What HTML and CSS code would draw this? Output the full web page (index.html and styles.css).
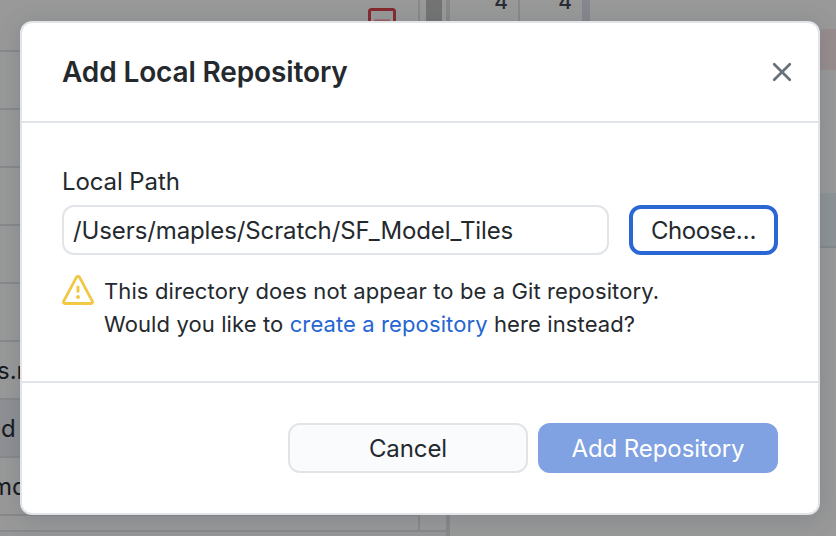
FILE: index.html
```html
<!DOCTYPE html>
<html lang="en">
<head>
<meta charset="utf-8">
<title>Add Local Repository</title>
<link rel="stylesheet" href="styles.css">
</head>
<body>
<main class="app">
  <section class="sidebar">
    <div class="files">
      <div class="row first"><svg class="removed" width="28" height="28" viewBox="0 0 28 28" fill="none"><rect x="1.5" y="1.5" width="25" height="25" rx="2" stroke="#862a30" stroke-width="3"/><path d="M6 12.5h16" stroke="#9d5a5e" stroke-width="2"/></svg></div>
      <div class="row"></div>
      <div class="row"></div>
      <div class="row"></div>
      <div class="row"></div>
      <div class="row"></div>
      <div class="row"><span class="name n1">s.md</span></div>
      <div class="row selected"><span class="name n2">d</span></div>
      <div class="row"><span class="name n3">md</span></div>
      <div class="row last"></div>
      <div class="row commit"></div>
    </div>
    <div class="scroll"><div class="thumb"></div></div>
  </section>
  <section class="diff">
    <div class="gutter"><span class="num">4</span><span class="num second">4</span><span class="strip"></span></div>
    <div class="code"><div class="deleted"></div><div class="hunk"></div></div>
  </section>
</main>
<div class="dialog" role="dialog" aria-labelledby="title">
  <header class="header">
    <h1 id="title" class="title">Add Local Repository</h1>
    <svg class="close" width="20" height="20" viewBox="0 0 20 20" fill="none" stroke="#69707a" stroke-width="2.7" stroke-linecap="round"><path d="M2.2 2.2 17.8 17.8M17.8 2.2 2.2 17.8"/></svg>
  </header>
  <div class="content">
    <div class="label"><span>Local Path</span></div>
    <div class="pathrow">
      <div class="input"><span class="path">/Users/maples/Scratch/SF_Model_Tiles</span></div>
      <button class="button choose"><span>Choose…</span></button>
    </div>
    <div class="warning">
      <svg class="alert" width="32" height="30" viewBox="0 0 32 30" fill="none" stroke="#f2c744" stroke-linecap="round" stroke-linejoin="round"><path d="M14.4 2.3a1.85 1.85 0 0 1 3.2 0L30.3 26.2a1.5 1.5 0 0 1-1.3 2.3H3a1.5 1.5 0 0 1-1.3-2.3Z" stroke-width="2.8"/><path d="M16 12v4.2" stroke-width="3"/><circle cx="16" cy="22" r="2" fill="#f2c744" stroke="none"/></svg>
      <p class="message">This directory does not appear to be a Git repository.<br>Would you like to <a class="link">create a repository</a> here instead?</p>
    </div>
  </div>
  <footer class="footer">
    <button class="button cancel"><span>Cancel</span></button>
    <button class="button add"><span>Add Repository</span></button>
  </footer>
</div>
</body>
</html>
```
FILE: styles.css
```css
* { box-sizing: border-box; }
body { margin: 0; width: 836px; height: 536px; overflow: hidden; font-family: Inter, "Liberation Sans", sans-serif; font-size: 24px; color: #24292e; }
.app { display: flex; width: 836px; height: 536px; background: #999; }
.sidebar { display: flex; width: 450px; border-right: 4px solid #87898c; background: #959698; }
.files { width: 420px; height: 532px; border-right: 2px solid #88898b; background: #999; overflow: hidden; }
.row { height: 58px; border-bottom: 2px solid #88898b; white-space: nowrap; line-height: 58px; }
.first { height: 52px; padding: 8px 0 0 368px; line-height: 0; }
.selected { background: #8e9094; }
.last { height: 16px; }
.commit { height: 4px; border: 0; }
.name { display: inline-block; color: #17191d; }
.n1 { margin-left: -3px; }
.n2 { margin-left: 1px; }
.n3 { margin-left: -9px; }
.scroll { flex: 1; height: 532px; padding-left: 6px; border-bottom: 2px solid #88898b; background: #999; }
.thumb { width: 16px; height: 180px; background: #747474; }
.diff { display: flex; flex: 1; }
.gutter { display: flex; width: 140px; height: 180px; }
.num { width: 70px; padding-right: 10px; border-right: 2px solid #88898c; text-align: right; font-size: 21px; font-weight: 500; line-height: 3px; color: #292c32; }
.second { width: 62px; border: 0; }
.strip { width: 8px; background: #85888d; }
.code { flex: 1; padding-top: 29px; }
.deleted { height: 41px; background: #978d8e; }
.hunk { height: 55px; margin-top: 123px; background: #8d9396; border-bottom: 2px solid #85888c; }
.dialog { position: absolute; left: 20px; top: 21px; width: 800px; height: 494px; border: 2px solid #e1e4e8; border-radius: 12px; background: #fff; box-shadow: 0 4px 24px rgba(52,67,80,.2); }
.header { display: flex; align-items: center; justify-content: space-between; height: 100px; padding: 0 26px 0 40px; border-bottom: 2px solid #e1e4e8; }
.title { margin: 0; font-size: 28px; font-weight: 600; line-height: 34px; letter-spacing: -.13px; white-space: nowrap; }
.content { height: 260px; padding: 40px 40px 0; border-bottom: 2px solid #e1e4e8; }
.label { height: 42px; line-height: 38px; letter-spacing: -.1px; }
.pathrow { display: flex; gap: 20px; height: 50px; }
.input { width: 547px; height: 50px; padding-left: 9px; border: 2px solid #e1e4e8; border-radius: 12px; line-height: 47px; letter-spacing: -.11px; white-space: nowrap; }
.button { display: flex; align-items: center; justify-content: center; padding: 0; height: 50px; border-radius: 12px; font: inherit; color: inherit; letter-spacing: -.1px; white-space: nowrap; }
.choose { width: 149px; border: 4px solid #2a67d4; background: #fff; letter-spacing: -.4px; }
.warning { display: flex; gap: 10px; padding-top: 20px; }
.message { margin: 0; font-size: 22px; line-height: 33px; letter-spacing: .11px; white-space: nowrap; }
.link { color: #2565d4; }
.footer { display: flex; justify-content: flex-end; gap: 10px; padding: 40px 40px 0; }
.cancel, .add { width: 240px; }
.cancel { border: 2px solid #e1e4e8; background: #fafbfd; }
.add { border: 0; background: #80a1e2; color: #fff; }
```
